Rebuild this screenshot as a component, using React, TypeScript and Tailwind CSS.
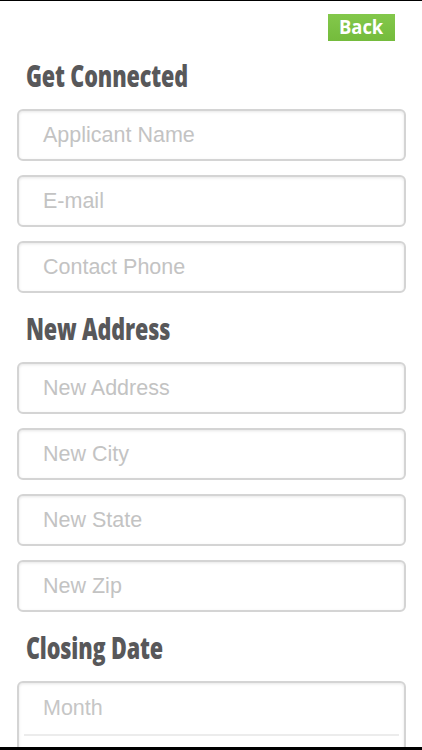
import React from "react";

const headFont = { fontFamily: '"Open Sans", "Noto Sans", sans-serif' };
const bodyFont = { fontFamily: '"Liberation Sans", Arial, sans-serif' };

function Heading({ text, first }: { text: string; first?: boolean }) {
  return (
    <div
      className={`${first ? "mt-[20px]" : "mt-[21px]"} h-[30px] pl-[9px] text-[30px] leading-[30px] font-extrabold text-[#58585a] whitespace-nowrap`}
      style={headFont}
    >
      <span className="inline-block origin-left scale-x-[0.72] tracking-[-0.2px]">{text}</span>
    </div>
  );
}

function Field({ label, first }: { label: string; first?: boolean }) {
  return (
    <div
      className={`${first ? "mt-[18px]" : "mt-[14px]"} h-[52px] rounded-[6px] border-2 border-[#d4d4d4] bg-white shadow-[inset_0_1px_3px_rgba(0,0,0,0.10)] flex items-center pl-[24px] text-[21.5px] text-[#c3c3c3]`}
      style={bodyFont}
    >
      {label}
    </div>
  );
}

export default function App() {
  return (
    <div className="w-full h-[750px] bg-white flex flex-col overflow-hidden border-t border-black">
      <div className="flex-1 overflow-hidden pl-[17px] pr-[16px]">
        <div className="flex justify-end pt-[13px] pr-[11px]">
          <div
            className="w-[67px] h-[27px] bg-gradient-to-b from-[#83c84b] to-[#74bb3c] flex items-center justify-center text-white text-[20px] font-bold leading-none"
            style={headFont}
          >
            <span className="-mt-[1px] inline-block scale-x-[0.92]">Back</span>
          </div>
        </div>

        <Heading text="Get Connected" first />
        <Field label="Applicant Name" first />
        <Field label="E-mail" />
        <Field label="Contact Phone" />

        <Heading text="New Address" />
        <Field label="New Address" first />
        <Field label="New City" />
        <Field label="New State" />
        <Field label="New Zip" />

        <Heading text="Closing Date" />
        <div className="mt-[18px] h-[120px] rounded-[6px] border-2 border-[#d4d4d4] bg-white shadow-[inset_0_1px_3px_rgba(0,0,0,0.10)] px-[5px]">
          <div
            className="h-[51px] flex items-center pl-[19px] text-[21.5px] text-[#c6c6c6]"
            style={bodyFont}
          >
            Month
          </div>
          <div className="h-[2px] bg-[#ececec]" />
          <div className="h-[51px]" />
        </div>
      </div>
      <div className="h-[3px] bg-black" />
    </div>
  );
}
